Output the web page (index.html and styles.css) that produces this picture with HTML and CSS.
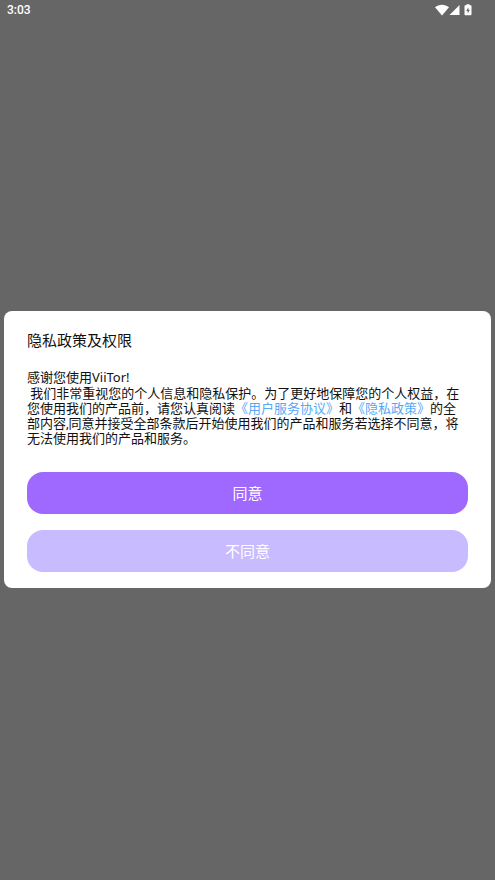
FILE: index.html
```html
<!DOCTYPE html>
<html lang="zh-CN">
<head>
<meta charset="utf-8">
<meta name="viewport" content="width=device-width, initial-scale=1">
<title>ViiTor</title>
<link rel="stylesheet" href="styles.css">
</head>
<body>
<header class="status">
  <time class="clock">3:03</time>
  <div class="indicators">
    <svg width="14" height="12" viewBox="0 0 14 12" aria-hidden="true"><path d="M0 3.2C4-.2 10-.2 14 3.2L7 11.4z" fill="#fff"/></svg>
    <svg width="11" height="12" viewBox="0 0 11 12" aria-hidden="true"><path d="M10.5 1v10H.5z" fill="#fff"/></svg>
    <svg class="battery" width="8" height="12" viewBox="0 0 8 12" aria-hidden="true"><path d="M2.5.3h3v1h1c.6 0 1 .4 1 1v8c0 .6-.4 1-1 1h-5c-.6 0-1-.4-1-1v-8c0-.6.4-1 1-1h1z" fill="#fff"/><path d="M4.4 3.2L2.2 6.9h1.5v2.6l2.2-3.7H4.4z" fill="#666"/></svg>
  </div>
</header>
<main class="overlay">
  <section class="dialog" role="dialog" aria-labelledby="dialog-title">
    <h1 class="title" id="dialog-title">隐私政策及权限</h1>
    <p class="text greeting">感谢您使用ViiTor!</p>
    <p class="text terms"> 我们非常重视您的个人信息和隐私保护。为了更好地保障您的个人权益，在
您使用我们的产品前，请您认真阅读<a href="#terms">《用户服务协议》</a>和<a href="#privacy">《隐私政策》</a>的全
部内容,同意并接受全部条款后开始使用我们的产品和服务若选择不同意，将
无法使用我们的产品和服务。</p>
    <div class="actions">
      <button class="button agree" type="button">同意</button>
      <button class="button decline" type="button">不同意</button>
    </div>
  </section>
</main>
</body>
</html>
```
FILE: styles.css
```css
* {
  box-sizing: border-box;
}

body {
  margin: 0;
  min-height: 100vh;
  display: flex;
  flex-direction: column;
  background: #666;
  color: #111;
  font-family: Roboto, "Noto Sans CJK SC", sans-serif;
}

.status {
  height: 20px;
  padding: 0 23px 0 7px;
  display: flex;
  align-items: center;
  justify-content: space-between;
  color: #fff;
}

.clock {
  font-size: 12px;
  font-weight: 500;
}

.indicators {
  display: flex;
  align-items: center;
}

.battery {
  margin-left: 4px;
}

.overlay {
  flex: 1;
  display: flex;
  align-items: center;
  padding: 0 4px 2px;
}

.dialog {
  flex: 1;
  padding: 20px 23px 16px;
  border-radius: 8px;
  background: #fff;
}

.title {
  margin: 0 0 19px;
  font-size: 15px;
  line-height: 20px;
  font-weight: 400;
}

.text {
  margin: 0;
  font-size: 13px;
  line-height: 15px;
}

.greeting {
  margin-bottom: 1px;
  font-family: "Noto Sans", "Noto Sans CJK SC", sans-serif;
}

.terms {
  white-space: pre-wrap;
}

.terms a {
  color: #59a8f5;
  text-decoration: none;
}

.actions {
  margin-top: 26px;
  display: flex;
  flex-direction: column;
  gap: 16px;
}

.button {
  height: 42px;
  border: 0;
  border-radius: 16px;
  color: #fff;
  font-family: inherit;
  font-size: 15px;
}

.agree {
  background: #9f69ff;
}

.decline {
  background: #c8bbff;
}
```
